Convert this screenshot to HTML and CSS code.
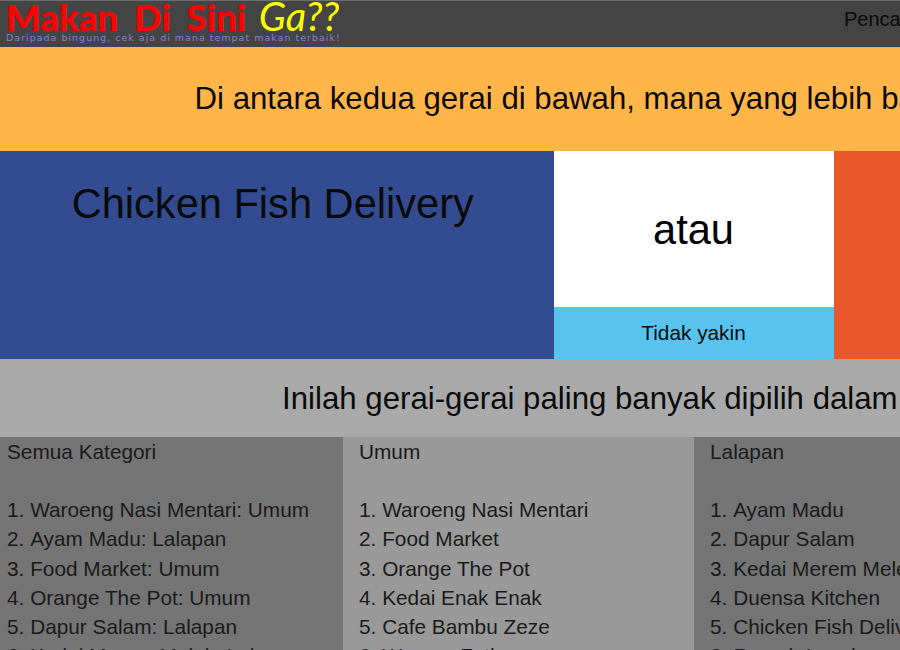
FILE: index.html
```html
<!DOCTYPE html>
<html lang="en">
	<head>
		<meta charset="utf-8">
		<meta name="viewport" content="width=device-width, initial-scale=1">
		<title>Makan Di Sini Ga??</title>
		<link rel="stylesheet" href="styles.css">
	</head>
	<body>
		<div id="page">
			<header id="header">
				<div class="brand">
					<div class="logo"><span class="logo-red">Makan Di Sini</span> <span class="logo-yellow">Ga??</span></div>
					<div class="tagline">Daripada bingung, cek aja di mana tempat makan terbaik!</div>
				</div>
				<a class="search" href="#">Pencarian</a>
			</header>
			<section class="question">Di antara kedua gerai di bawah, mana yang lebih baik menurut mereka?</section>
			<section class="versus">
				<a class="choice choice-left" href="#">Chicken Fish Delivery</a>
				<div class="middle">
					<div class="atau">atau</div>
					<a class="unsure" href="#">Tidak yakin</a>
				</div>
				<a class="choice choice-right" href="#">Orange The Pot</a>
			</section>
			<section class="question question-grey">Inilah gerai-gerai paling banyak dipilih dalam pekan terakhir</section>
			<section class="ranks">
				<div class="rank rank-dark">
					<h3>Semua Kategori</h3>
					<ol>
						<li>Waroeng Nasi Mentari: Umum</li>
						<li>Ayam Madu: Lalapan</li>
						<li>Food Market: Umum</li>
						<li>Orange The Pot: Umum</li>
						<li>Dapur Salam: Lalapan</li>
						<li>Kedai Merem Melek: Lalapan</li>
					</ol>
				</div>
				<div class="rank rank-light">
					<h3>Umum</h3>
					<ol>
						<li>Waroeng Nasi Mentari</li>
						<li>Food Market</li>
						<li>Orange The Pot</li>
						<li>Kedai Enak Enak</li>
						<li>Cafe Bambu Zeze</li>
						<li>Warung Fathur</li>
					</ol>
				</div>
				<div class="rank rank-dark">
					<h3>Lalapan</h3>
					<ol>
						<li>Ayam Madu</li>
						<li>Dapur Salam</li>
						<li>Kedai Merem Melek</li>
						<li>Duensa Kitchen</li>
						<li>Chicken Fish Delivery</li>
						<li>Rumah Lesehan</li>
					</ol>
				</div>
			</section>
		</div>
	</body>
</html>
```
FILE: styles.css
```css
html, body {
	margin: 0;
	height: 650px;
	overflow: hidden;
}
body {
	font-family: "Liberation Sans", Arial, sans-serif;
	color: #0a0a0a;
}
a {
	color: inherit;
	text-decoration: none;
}
#page {
	width: 1386px;
}

#header {
	display: flex;
	justify-content: space-between;
	height: 47px;
	box-sizing: border-box;
	border-top: 1px solid #6e6e6e;
	background-color: #444;
}
.brand {
	padding-left: 6px;
}
.logo {
	font-family: "Lato", sans-serif;
	font-size: 36.5px;
	line-height: 31px;
	word-spacing: 7px;
}
.logo-red {
	color: #f00;
	font-weight: 900;
}
.logo-yellow {
	margin-left: -4px;
	color: #ff0;
	font-size: 40px;
	font-style: italic;
	word-spacing: 0;
}
.tagline {
	font-family: "DejaVu Sans", sans-serif;
	font-size: 9.5px;
	letter-spacing: 1px;
	line-height: 10px;
	color: #8080dc;
}
.search {
	width: 542px;
	font-size: 20px;
	line-height: 36px;
}

.question {
	height: 104px;
	line-height: 104px;
	text-align: center;
	font-size: 31.2px;
	background-color: #ffb547;
}
.question-grey {
	height: 78px;
	line-height: 79px;
	background-color: #a9a9a9;
}

.versus {
	display: grid;
	grid-template-columns: 553.5px 280px 1fr;
	height: 208px;
}
.choice {
	padding: 27px 8px 0 0;
	text-align: center;
	font-size: 41.6px;
	line-height: 52px;
}
.choice-left {
	background-color: #334b91;
}
.choice-right {
	background-color: #ea572b;
}
.middle {
	display: flex;
	flex-direction: column;
}
.atau {
	flex: 1;
	display: flex;
	align-items: center;
	justify-content: center;
	padding-top: 2px;
	background-color: #fff;
	color: #000;
	font-size: 41.6px;
}
.unsure {
	height: 52px;
	line-height: 52px;
	text-align: center;
	font-size: 20.8px;
	background-color: #59c3f0;
}

.ranks {
	display: grid;
	grid-template-columns: 343px 351px 351px 1fr;
	height: 300px;
}
.rank {
	font-size: 20.8px;
	line-height: 29.25px;
	padding: 0 0 0 16px;
	color: #1a1a1a;
}
.rank:first-child {
	padding-left: 7px;
}
.rank-dark {
	background-color: #757575;
}
.rank-light {
	background-color: #999;
}
.rank h3 {
	margin: 0 0 28.75px;
	font: inherit;
}
.rank ol {
	margin: 0;
	padding: 0;
	list-style-position: inside;
}
```
